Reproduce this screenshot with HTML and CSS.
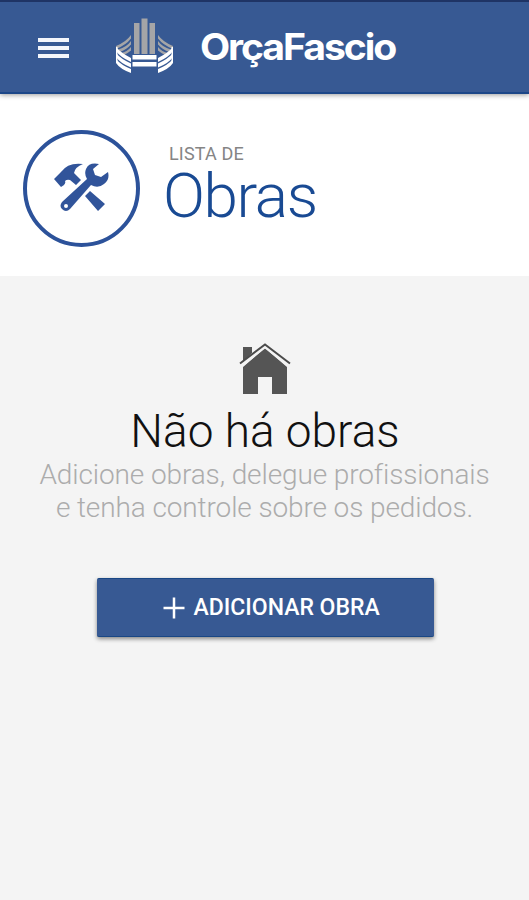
FILE: index.html
```html
<!DOCTYPE html>
<html lang="pt-BR">
<head>
<meta charset="utf-8">
<meta name="viewport" content="width=device-width, initial-scale=1">
<title>OrçaFascio</title>
<link rel="stylesheet" href="styles.css">
</head>
<body>
<header class="appbar">
  <button class="menu" aria-label="Menu"><span></span><span></span><span></span></button>
  <svg class="emblem" viewBox="0 0 60 60" aria-hidden="true">
    <defs>
      <g id="wing">
        <path fill="#a5a5a7" d="M16 19V22.500Q11 29 1 33V30Q11 26 16 19ZM16 25V28.500Q12 33 5 36L2 34Q12 31 16 25ZM16 31V34.500Q13 37 9 39L6 37Q12 36 16 31Z"/>
        <path fill="#fff" d="M1 31Q6 37 16 42V46Q5 41 1 35ZM1 37Q6 43 16 47.500V51.500Q5 47 1 41ZM1 43Q6 49 16 53V57Q5 53 1 47Z"/>
        <path fill="#fff" d="M1 31h1.500v15H1z"/>
      </g>
    </defs>
    <path fill="#a5a5a7" d="M19 7h5.500v31H19zM26.500 2.500h6V38h-6zM34.500 7H40v31h-5.500z"/>
    <use href="#wing"/>
    <use href="#wing" transform="matrix(-1 0 0 1 59 0)"/>
    <path fill="#fff" d="M17.500 39h24v4.500h-24zM17.500 46h24v4.500h-24z"/>
  </svg>
  <span class="brand">OrçaFascio</span>
</header>
<section class="heading">
  <div class="badge">
    <svg viewBox="0 0 56 49" aria-hidden="true">
      <path fill="#31549a" d="M0 16 7 9Q14-1 29 1Q21 4 20 10L27 17 22 22 16 17Q13 16 11 18Q12 20 10 22L7 24ZM31 33 36 28 51 41 44 48Z"/>
      <path fill="#31549a" fill-rule="evenodd" d="M45 1Q35-1 32 6Q30 11 33 16L8 39Q5 43 8 46Q12 50 16 46L37 22Q44 26 50 21Q56 17 54 9L47 14 41 12 39 6ZM12 41a2 2 0 1 1 0 4a2 2 0 1 1 0-4Z"/>
    </svg>
  </div>
  <div class="titles">
    <p class="eyebrow">LISTA DE</p>
    <h1>Obras</h1>
  </div>
</section>
<main class="empty">
  <svg class="house" viewBox="0 0 52 52" aria-hidden="true">
    <path fill="#555" d="M4 4h9v6L4 19zM4 24 26 5 48 24V51H33V34H19V51H4Z"/>
    <path fill="none" stroke="#f4f4f4" stroke-width="3" d="M2 23 26 3.500 50 23"/>
    <path fill="none" stroke="#4b4b4b" stroke-width="2" d="M1 20.500 26 1.500 51 20.500"/>
  </svg>
  <h2>Não há obras</h2>
  <p class="hint">Adicione obras, delegue profissionais<br>e tenha controle sobre os pedidos.</p>
  <button class="add">
    <svg viewBox="0 0 22 22" aria-hidden="true"><path d="M11 .5v21M.5 11h21" stroke="#fff" stroke-width="2.500"/></svg>
    <span>ADICIONAR OBRA</span>
  </button>
</main>
</body>
</html>
```
FILE: styles.css
```css
* { box-sizing: border-box; }
body { margin: 0; min-height: 900px; background: #f4f4f4; font-family: Roboto, sans-serif; overflow: hidden; }
h1, h2, p { margin: 0; font-weight: 300; white-space: nowrap; }
button { border: 0; padding: 0; font-family: inherit; }
.appbar { position: relative; z-index: 1; display: flex; align-items: flex-start; height: 94px; background: #375993; border-top: 2px solid #1f3465; border-bottom: 2px solid #1c4788; box-shadow: 0 1px 5px rgba(0,0,0,.4); }
.menu { display: flex; flex-direction: column; gap: 4px; width: 31px; margin: 36px 0 0 38px; background: none; }
.menu span { height: 4px; background: #f4f6fb; }
.emblem { width: 60px; height: 60px; margin: 14px 0 0 46px; }
.brand { margin: 22px 0 0 25px; font: 650 37px/46px Inter, sans-serif; letter-spacing: -2px; color: #fff; transform: scaleX(1.06); transform-origin: left; }
.heading { display: flex; height: 182px; padding: 36px 0 0 23px; background: #fff; }
.badge { display: flex; width: 117px; height: 117px; border: 4px solid #2c529a; border-radius: 50%; padding: 29px 0 0 27px; }
.badge svg { width: 56px; height: 49px; }
.titles { margin-left: 23px; }
.eyebrow { margin: 13px 0 0 6px; font-size: 18px; line-height: 22px; font-weight: 400; letter-spacing: .15px; color: #858585; }
h1 { font-size: 62px; line-height: 62px; letter-spacing: -1.4px; color: #194a93; }
.empty { display: flex; flex-direction: column; align-items: center; padding-top: 67px; }
.house { width: 52px; height: 52px; }
h2 { margin: 9px 0 0 1px; font-size: 46px; line-height: 54px; color: #111; }
.hint { font-size: 28px; line-height: 33px; letter-spacing: -.11px; text-align: center; color: #acacac; }
.add { display: flex; align-items: center; width: 337px; height: 59px; margin: 54px 0 0 1px; padding-left: 66px; gap: 9px; border-radius: 2px; border-top: 1px solid #194785; border-bottom: 1px solid #194785; background: #375993; color: #fff; font-size: 23px; font-weight: 500; white-space: nowrap; box-shadow: 0 2px 4px rgba(0,0,0,.45); }
.add svg { width: 22px; height: 22px; }
```
